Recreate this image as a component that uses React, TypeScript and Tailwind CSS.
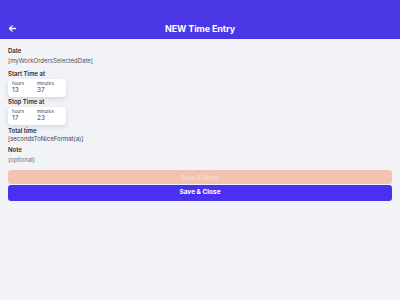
import React from "react";

function TimeCard({ h, m }: { h: string; m: string }) {
  return (
    <div className="flex h-[18px] w-[58px] gap-[9px] rounded-[4px] bg-white px-[4px] pt-[2px] shadow-[0_2px_5px_rgba(0,0,0,0.12)]">
      <div className="flex w-[16px] flex-col">
        <span className="text-[4.5px] leading-[6px] text-gray-700">hours</span>
        <span className="text-[6.5px] leading-[7px] text-gray-700">{h}</span>
      </div>
      <div className="flex flex-col">
        <span className="text-[4.5px] leading-[6px] text-gray-700">minutes</span>
        <span className="text-[6.5px] leading-[7px] text-gray-700">{m}</span>
      </div>
    </div>
  );
}

export default function App() {
  return (
    <div
      className="flex h-[300px] w-[400px] flex-col bg-[#f1f3f7]"
      style={{ fontFamily: "Inter, 'Noto Sans', sans-serif" }}
    >
      <div className="relative flex h-[39px] w-full items-end justify-center bg-[#4b37e6] pb-[4px]">
        <svg
          className="absolute left-[8px] top-[24px]"
          width="9"
          height="9"
          viewBox="0 0 24 24"
          fill="none"
          stroke="white"
          strokeWidth="3.5"
          strokeLinecap="round"
          strokeLinejoin="round"
        >
          <path d="M20 12H5" />
          <path d="M11 5l-7 7 7 7" />
        </svg>
        <span className="text-[9px] font-bold leading-[12px] tracking-[-0.1px] text-white">NEW Time Entry</span>
      </div>
      <div className="flex flex-col px-[8px] pt-[7px] text-[#2a2a2a]">
        <span className="text-[6px] font-semibold leading-[10px]">Date</span>
        <span className="text-[6px] leading-[10px] text-gray-600">[myWorkOrdersSelectedDate]</span>
        <span className="mt-[3px] text-[6px] font-semibold leading-[10px]">Start Time at</span>
        <TimeCard h="13" m="37" />
        <span className="text-[6px] font-semibold leading-[10px]">Stop Time at</span>
        <TimeCard h="17" m="23" />
        <span className="mt-[1px] text-[6px] font-semibold leading-[9px]">Total time</span>
        <span className="text-[6px] leading-[7px] text-gray-700">[secondsToNiceFormat(a)]</span>
        <span className="mt-[3px] text-[6px] font-semibold leading-[10px]">Note</span>
        <span className="text-[6px] leading-[10px] text-gray-500">(optional)</span>
        <div className="mt-[5px] flex h-[14px] items-center justify-center rounded-[3px] bg-[#f1c3b0]">
          <span className="text-[6px] font-semibold text-[#f7ddd2]">Save &amp; Other</span>
        </div>
        <div className="mt-[1px] flex h-[16px] items-center justify-center rounded-[3px] bg-[#4a30f0]">
          <span className="text-[6.5px] font-bold text-white">Save &amp; Close</span>
        </div>
      </div>
    </div>
  );
}
